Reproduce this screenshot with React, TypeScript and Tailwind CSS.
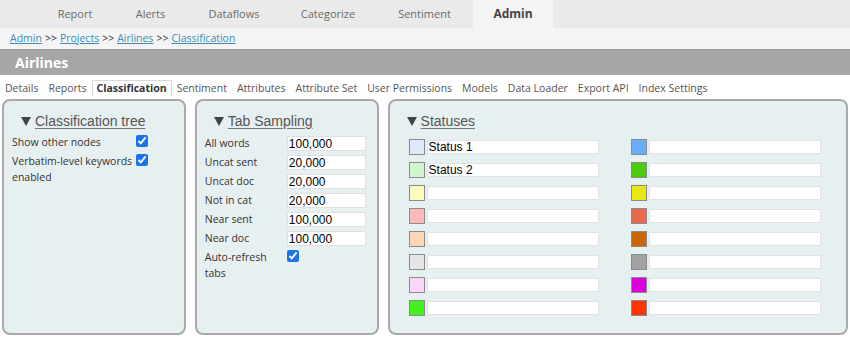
import React from 'react';

const topTabs = [
  { name: 'Report', w: 'w-[76px]' },
  { name: 'Alerts', w: 'w-[75px]' },
  { name: 'Dataflows', w: 'w-[92px]' },
  { name: 'Categorize', w: 'w-[96px]' },
  { name: 'Sentiment', w: 'w-[97px]' },
  { name: 'Admin', w: 'w-[80px]', active: true },
];

const subTabs = [
  'Details',
  'Reports',
  'Classification',
  'Sentiment',
  'Attributes',
  'Attribute Set',
  'User Permissions',
  'Models',
  'Data Loader',
  'Export API',
  'Index Settings',
];

const sampling = [
  { label: 'All words', value: '100,000' },
  { label: 'Uncat sent', value: '20,000' },
  { label: 'Uncat doc', value: '20,000' },
  { label: 'Not in cat', value: '20,000' },
  { label: 'Near sent', value: '100,000' },
  { label: 'Near doc', value: '100,000' },
];

// swatch colours, left column then right column
const leftStatuses = [
  { color: 'bg-[#dfe9fb]', text: 'Status 1' },
  { color: 'bg-[#cff6cf]', text: 'Status 2' },
  { color: 'bg-[#fcfbbf]', text: '' },
  { color: 'bg-[#fbb9b9]', text: '' },
  { color: 'bg-[#fdd6b3]', text: '' },
  { color: 'bg-[#e5e5e5]', text: '' },
  { color: 'bg-[#fbd6fb]', text: '' },
  { color: 'bg-[#44f01c]', text: '' },
];

const rightStatuses = [
  'bg-[#69acfb]',
  'bg-[#4bcb0e]',
  'bg-[#e9e812]',
  'bg-[#e9694b]',
  'bg-[#cc6602]',
  'bg-[#a2a2a2]',
  'bg-[#dc00dc]',
  'bg-[#ff3505]',
];

const PanelTitle: React.FC<{ title: string }> = ({ title }) => (
  <div className="flex items-center h-[20px] pl-[17px] text-[14px] text-[#555] font-['Liberation_Sans',Arial,sans-serif]">
    <svg width="10" height="9" viewBox="0 0 10 9" className="mr-[4px]">
      <path d="M0 0 H10 L5 9 Z" fill="#444" />
    </svg>
    <span className="underline underline-offset-2 decoration-[#777]">{title}</span>
  </div>
);

const Check = () => (
  <input type="checkbox" defaultChecked className="m-0 w-[12px] h-[12px] accent-[#1a73e8]" />
);

const StatusRow: React.FC<{ color: string; text: string }> = ({ color, text }) => (
  <div className="flex items-center h-[23px]">
    <div className={`w-[16px] h-[16px] border border-[#8a8a8a] ${color}`} />
    <input
      defaultValue={text}
      className="ml-[2px] w-[172px] h-[14px] bg-white border border-[#e2e2e2] px-[1px] text-[12px] text-black font-['Liberation_Sans',Arial,sans-serif] outline-none"
    />
  </div>
);

export default function App() {
  return (
    <div className="w-[850px] h-[339px] bg-white font-['Open_Sans',sans-serif] overflow-hidden">
      {/* top navigation */}
      <div className="flex h-[28px] bg-[#eaeaea] pl-[37px]">
        {topTabs.map((t) => (
          <div
            key={t.name}
            className={`${t.w} flex items-center justify-center ${
              t.active ? 'bg-[#f4f4f4] font-bold text-[12px] text-[#444]' : 'text-[11px] text-[#6a6a6a]'
            }`}
          >
            {t.name}
          </div>
        ))}
      </div>

      {/* breadcrumb */}
      <div className="h-[21px] bg-[#f4f4f4] flex items-center pl-[10px] text-[10.5px] text-[#333] gap-[3px]">
        <a className="text-[#3a8db5] underline">Admin</a>
        <span>&gt;&gt;</span>
        <a className="text-[#3a8db5] underline">Projects</a>
        <span>&gt;&gt;</span>
        <a className="text-[#3a8db5] underline">Airlines</a>
        <span>&gt;&gt;</span>
        <a className="text-[#3a8db5] underline">Classification</a>
      </div>

      {/* project header */}
      <div className="h-[26px] bg-[#a6a6a6] border-t border-[#999] flex items-center pl-[15px] text-white font-bold text-[14px]">
        Airlines
      </div>

      {/* sub tabs */}
      <div className="flex items-end h-[20px] mt-[1px] text-[10.5px] text-[#555]">
        {subTabs.map((s) => (
          <div
            key={s}
            className={`px-[4px] h-[16px] leading-[15px] ${
              s === 'Classification'
                ? 'font-bold text-[#333] border border-b-0 border-[#d8d8d8] bg-white'
                : 'border border-transparent'
            }`}
          >
            {s}
          </div>
        ))}
      </div>

      {/* panels */}
      <div className="flex px-[2px] pt-[3px] gap-[9px]">
        <div className="w-[184px] h-[236px] bg-[#e7f0f0] border-2 border-[#a9a9a9] rounded-[8px] pt-[10px]">
          <PanelTitle title="Classification tree" />
          <div className="mt-[3px] px-[8px] text-[10.5px] text-[#333] leading-[16px]">
            <div className="flex items-start">
              <span className="w-[124px]">Show other nodes</span>
              <span className="pt-[1px]"><Check /></span>
            </div>
            <div className="flex items-start mt-[2px]">
              <span className="w-[124px]">Verbatim-level keywords enabled</span>
              <span className="pt-[1px]"><Check /></span>
            </div>
          </div>
        </div>

        <div className="w-[184px] h-[236px] bg-[#e7f0f0] border-2 border-[#a9a9a9] rounded-[8px] pt-[10px]">
          <PanelTitle title="Tab Sampling" />
          <div className="mt-[3px] px-[8px] text-[10.5px] text-[#333]">
            {sampling.map((r) => (
              <div key={r.label} className="flex items-center h-[19px]">
                <span className="w-[82px]">{r.label}</span>
                <input
                  defaultValue={r.value}
                  className="w-[79px] h-[15px] bg-white border border-[#e0e0e0] px-[1px] text-[12px] text-black font-['Liberation_Sans',Arial,sans-serif] outline-none"
                />
              </div>
            ))}
            <div className="flex items-start leading-[16px] mt-[1px]">
              <span className="w-[82px]">Auto-refresh tabs</span>
              <span className="pt-[1px]"><Check /></span>
            </div>
          </div>
        </div>

        <div className="w-[461px] h-[236px] bg-[#e7f0f0] border-2 border-[#a9a9a9] rounded-[8px] pt-[10px]">
          <PanelTitle title="Statuses" />
          <div className="flex gap-[32px] mt-[4px] pl-[19px]">
            <div className="flex flex-col">
              {leftStatuses.map((s, i) => (
                <StatusRow key={i} color={s.color} text={s.text} />
              ))}
            </div>
            <div className="flex flex-col">
              {rightStatuses.map((c, i) => (
                <StatusRow key={i} color={c} text="" />
              ))}
            </div>
          </div>
        </div>
      </div>
    </div>
  );
}
